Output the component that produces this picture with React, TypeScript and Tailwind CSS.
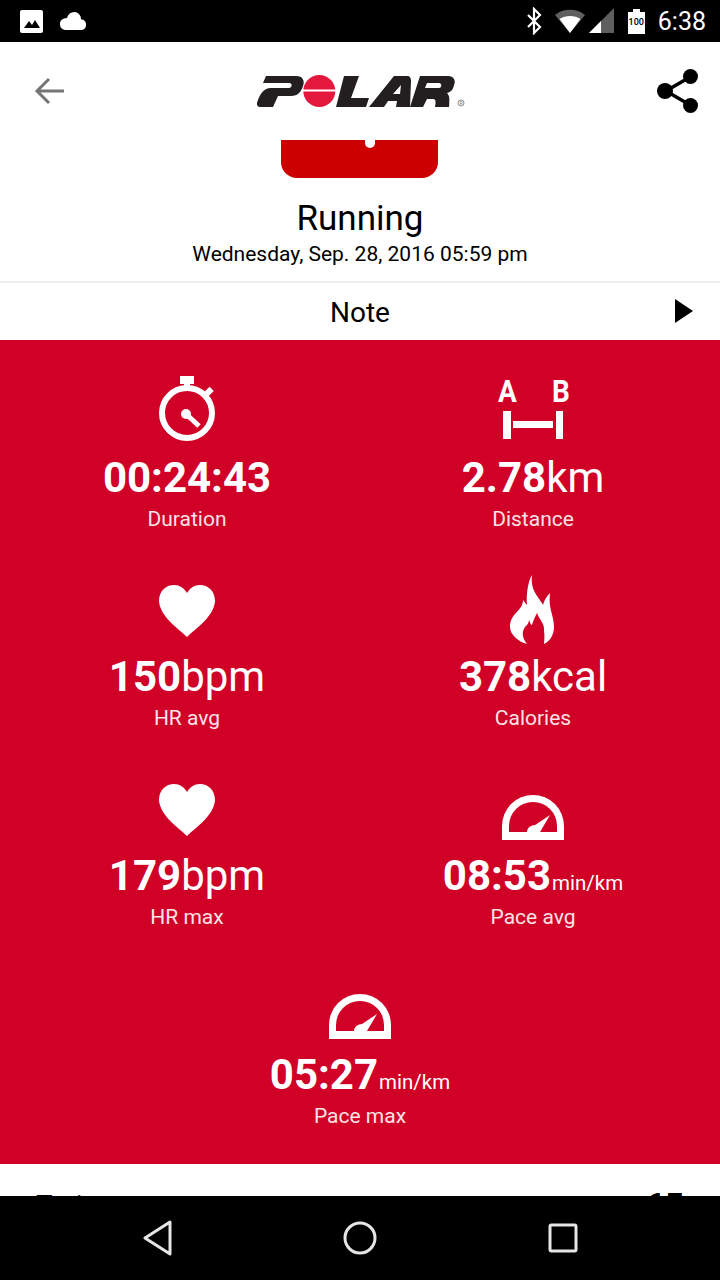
import React from "react";

const font = { fontFamily: "Roboto, sans-serif" };

function StatusBar() {
  return (
    <div className="h-[42px] bg-black flex items-center justify-between shrink-0 pl-[20px] pr-[14px]">
      <div className="flex items-center gap-[14px]">
        <svg width="24" height="24" viewBox="0 0 24 24">
          <rect x="0" y="1" width="23" height="23" rx="2" fill="#fff" />
          <path d="M4 19l5-7 3 4 3-5 5 8z" fill="#000" />
        </svg>
        <svg width="30" height="20" viewBox="0 0 30 20">
          <path d="M7 19a6 6 0 0 1-1-11.6 9 9 0 0 1 3-.4A8 8 0 0 1 17 1a7 7 0 0 1 6 7.2A5.5 5.5 0 0 1 24 19z" fill="#fff" />
        </svg>
      </div>
      <div className="flex items-center">
        <svg width="20" height="28" viewBox="0 0 20 28" className="mr-[10px]">
          <path d="M3 8l12 12-6 6V2l6 6L3 20" fill="none" stroke="#fff" strokeWidth="2.2" />
        </svg>
        <svg width="30" height="26" viewBox="0 0 30 26">
          <path d="M0 7C8 0 22 0 30 7L15 25z" fill="#5f5f5f" />
          <path d="M4.5 11c6-4 15-4 21 0L15 25z" fill="#fff" />
        </svg>
        <svg width="26" height="26" viewBox="0 0 26 26" className="ml-[4px] mr-[13px]">
          <path d="M0 25L25 0v25z" fill="#5f5f5f" />
          <path d="M0 25L12 13v12z" fill="#fff" />
        </svg>
        <div className="relative w-[17px] h-[25px] mr-[13px]">
          <div className="absolute left-[5px] top-0 w-[7px] h-[3px] bg-white" />
          <div className="absolute left-0 top-[3px] w-[17px] h-[22px] bg-white flex items-center justify-center">
            <span className="text-[9px] leading-none text-black font-medium" style={font}>100</span>
          </div>
        </div>
        <span className="text-white text-[25px] leading-none" style={font}>6:38</span>
      </div>
    </div>
  );
}

function PolarLogo() {
  return (
    <svg width="212" height="36" viewBox="0 0 212 36">
      <path d="M11 3H41C48 3 50 8 48 13C46 19 43 23 36 23H23L18 34H5C2 34 1 31 3 27C5 22 8 15 16 15H34C37 15 38 10 34 10H8Z" fill="#231f20" />
      <circle cx="64.3" cy="18" r="16" fill="#e4173d" />
      <rect x="48" y="16.5" width="33" height="2" fill="#fff" />
      <path d="M89 3H104L96 25H114L111 34H81Z" fill="#231f20" />
      <path fillRule="evenodd" d="M139 3H152C155 3 156 5 156 8L155 34H141L142 28H133L129 34H114ZM146 12L138 21H145Z" fill="#231f20" />
      <path fillRule="evenodd" d="M165 3H193C199 3 201 8 199 12C198 17 196 19 192 20C194 22 195 24 194 34H180C181 29 181 26 178 26H172L168 34H155ZM172 10L170 15H184C187 15 187 10 184 10Z" fill="#231f20" />
      <circle cx="206" cy="30" r="3" fill="none" stroke="#777" strokeWidth="0.8" />
      <text x="206" y="32" textAnchor="middle" fontSize="5" fill="#777" fontFamily="Roboto, sans-serif">R</text>
    </svg>
  );
}

function Toolbar() {
  return (
    <div className="h-[98px] bg-white flex items-center justify-between shrink-0 pl-[34px] pr-[21px]">
      <svg width="30" height="30" viewBox="0 0 30 30">
        <path d="M30 15H3M15 3L3 15l12 12" fill="none" stroke="#757575" strokeWidth="3" />
      </svg>
      <PolarLogo />
      <svg width="42" height="44" viewBox="0 0 42 44">
        <path d="M33 8L9 22l24 14" fill="none" stroke="#000" strokeWidth="3.5" />
        <circle cx="33.5" cy="7.5" r="7.5" fill="#000" />
        <circle cx="8" cy="22" r="8" fill="#000" />
        <circle cx="33.5" cy="36.5" r="7.5" fill="#000" />
      </svg>
    </div>
  );
}

function Stopwatch() {
  return (
    <svg width="60" height="68" viewBox="0 0 60 68">
      <rect x="23" y="1" width="14" height="8" fill="#fff" />
      <rect x="27" y="8" width="6" height="6" fill="#fff" />
      <rect x="47" y="14" width="9" height="6" fill="#fff" transform="rotate(-45 51.5 17)" />
      <circle cx="30" cy="38" r="25" fill="none" stroke="#fff" strokeWidth="6" />
      <circle cx="29" cy="39" r="5" fill="#fff" />
      <path d="M29 39l13 12" stroke="#fff" strokeWidth="5" />
    </svg>
  );
}

function Distance() {
  const letter = "absolute top-[1px] text-white text-[31px] leading-[32px] font-bold scale-x-90";
  return (
    <div className="relative w-[70px] h-[68px]">
      <span className={`${letter} -left-px`} style={font}>A</span>
      <span className={`${letter} left-[53px]`} style={font}>B</span>
      <svg className="absolute left-0 top-0" width="70" height="68" viewBox="0 0 70 68">
        <rect x="5" y="36" width="8" height="28" fill="#fff" />
        <rect x="58" y="36" width="7" height="28" fill="#fff" />
        <rect x="15" y="46" width="40" height="7" fill="#fff" />
      </svg>
    </div>
  );
}

function Heart() {
  return (
    <svg width="60" height="68" viewBox="0 0 60 68">
      <path d="M30 63C22 55 3 43 2 27 2 17 9 11 17 11c6 0 10 3 13 8 3-5 7-8 13-8 8 0 15 6 15 16-1 16-20 28-28 36z" fill="#fff" />
    </svg>
  );
}

function Flame() {
  return (
    <svg width="60" height="72" viewBox="0 0 60 72" className="-mb-[3px]">
      <path
        d="M29 2C25 8 23 22 24 32C22 30 21 28 20 27C20 38 7 40 7 54C7 62 16 69 24 71C20 66 18 60 22 54C24 52 26 50 26 47C27 50 28 52 29 52C30 48 32 44 34 40C36 46 41 50 41 56C41 60 42 62 41 71C47 68 51 62 51 54C51 42 45 36 47 20C43 24 41 28 40 32C36 24 27 18 29 2Z"
        fill="#fff"
      />
    </svg>
  );
}

function Gauge() {
  return (
    <svg width="64" height="48" viewBox="0 0 64 48">
      <path fill="#fff" d="M1 47V33a31 31 0 0 1 62 0V47z" />
      <path fill="#d00027" d="M8 39V33a24 24 0 0 1 48 0V39z" />
      <path fill="#fff" d="M26 39C26 35 30 32 34 32L49 22L39 39Z" />
    </svg>
  );
}

type StatProps = {
  icon: React.ReactNode;
  value: string;
  unit?: string;
  small?: boolean;
  label: string;
  className?: string;
};

function Stat({ icon, value, unit, small, label, className }: StatProps) {
  return (
    <div className={`h-[199px] flex flex-col items-center text-white ${className ?? ""}`} style={font}>
      <div className="h-[78px] flex items-end justify-center">{icon}</div>
      <div className="h-[46px] flex items-baseline justify-center whitespace-nowrap mt-[12px]">
        <span className="text-[42px] leading-[46px] font-bold">{value}</span>
        {unit && (
          <span className={small ? "text-[20.5px] leading-[46px] ml-px" : "text-[42px] leading-[46px]"}>{unit}</span>
        )}
      </div>
      <div className="text-[21px] leading-[24px] mt-[6px] text-[#fbe3e8]">{label}</div>
    </div>
  );
}

export default function App() {
  return (
    <div className="w-[720px] h-[1280px] flex flex-col overflow-hidden bg-white" style={font}>
      <StatusBar />
      <Toolbar />
      <main className="flex-1 min-h-0 overflow-hidden bg-white">
        <div className="flex flex-col items-center">
          <div className="relative w-[157px] h-[38px] mr-[1px] bg-[#cc0000] rounded-b-[16px]">
            <div className="absolute left-[84px] top-0 w-[10px] h-[8px] bg-white rounded-b-full" />
          </div>
          <div className="text-[35px] leading-[40px] text-black mt-[21px]">Running</div>
          <div className="text-[21px] leading-[24px] text-black mt-[3px]">Wednesday, Sep. 28, 2016 05:59 pm</div>
        </div>
        <div className="mt-[15px] h-[59px] border-t-2 border-[#eeeeee] flex items-center justify-center relative">
          <span className="text-[28px] leading-none text-black pt-[3px]">Note</span>
          <svg className="absolute right-[26px] top-[15px]" width="20" height="26" viewBox="0 0 20 26">
            <path d="M1 1l18 12L1 25z" fill="#000" />
          </svg>
        </div>
        <section className="h-[824px] bg-[#d00027] pt-[25px] px-[14px]">
          <div className="grid grid-cols-2">
            <Stat icon={<Stopwatch />} value="00:24:43" label="Duration" />
            <Stat icon={<Distance />} value="2.78" unit="km" label="Distance" />
            <Stat icon={<Heart />} value="150" unit="bpm" label="HR avg" />
            <Stat icon={<Flame />} value="378" unit="kcal" label="Calories" />
            <Stat icon={<Heart />} value="179" unit="bpm" label="HR max" />
            <Stat icon={<Gauge />} value="08:53" unit="min/km" small label="Pace avg" />
            <Stat icon={<Gauge />} value="05:27" unit="min/km" small label="Pace max" className="col-span-2" />
          </div>
        </section>
        <div className="flex justify-between items-start pl-[36px] pr-[36px] pt-[26px] text-[28px] leading-[32px] text-black">
          <span>Train</span>
          <span className="text-[34px] font-bold -mt-[1px]">65</span>
        </div>
      </main>
      <div className="h-[84px] bg-black shrink-0 flex items-center justify-center">
        <div className="relative w-[720px] h-[84px]">
          <svg className="absolute left-[142px] top-[24px]" width="32" height="36" viewBox="0 0 32 36">
            <path d="M28 2v32L3 18z" fill="none" stroke="#e6e6e6" strokeWidth="3" strokeLinejoin="round" />
          </svg>
          <svg className="absolute left-[342px] top-[24px]" width="36" height="36" viewBox="0 0 36 36">
            <circle cx="18" cy="18" r="15" fill="none" stroke="#e6e6e6" strokeWidth="3" />
          </svg>
          <svg className="absolute left-[546px] top-[25px]" width="34" height="34" viewBox="0 0 34 34">
            <rect x="4" y="4" width="26" height="26" rx="1.5" fill="none" stroke="#e6e6e6" strokeWidth="3" />
          </svg>
        </div>
      </div>
    </div>
  );
}
